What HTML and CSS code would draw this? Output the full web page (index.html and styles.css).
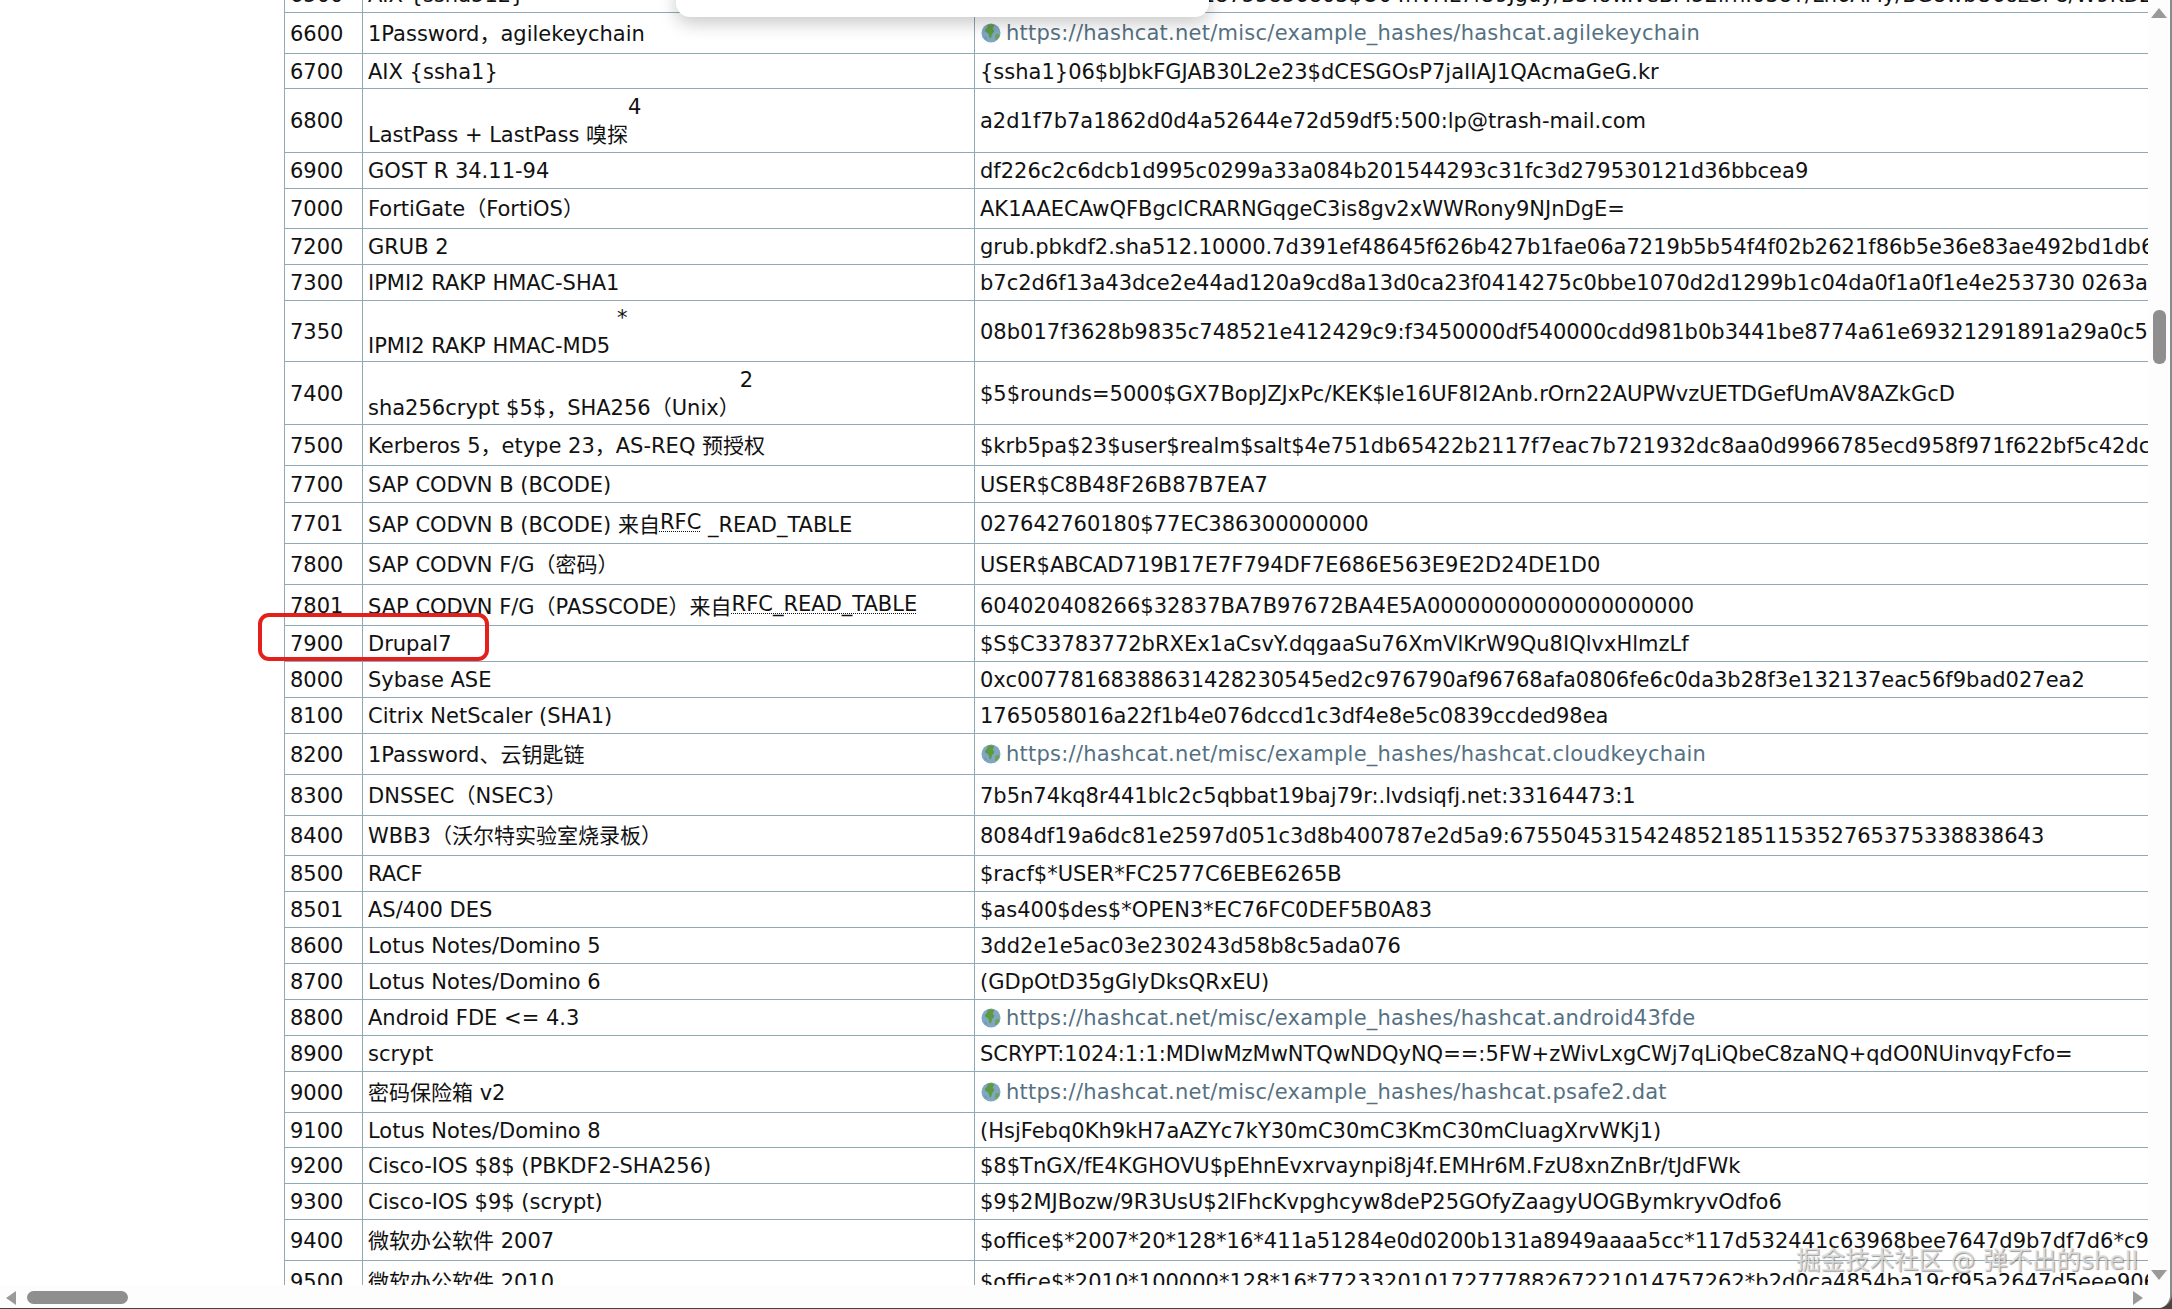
FILE: index.html
```html
<!DOCTYPE html>
<html lang="zh">
<head>
<meta charset="utf-8">
<title>hashcat example hashes</title>
<link rel="stylesheet" href="styles.css">
</head>
<body>
<svg class="defs" width="0" height="0" aria-hidden="true">
  <symbol id="globe" viewBox="0 0 20 20">
    <circle cx="10" cy="10" r="9.5" fill="#7fa6c2"/>
    <path d="M7 2c2-1 5-.8 6 .4.5 1-1 1.600-1.200 2.800-.2 1.300 1.800 1.400 1.400 3-.4 1.500-1.800 1.900-2.200 3.400-.4 1.300-.5 3.200-1.600 3.900C8 15 8.400 12.700 7.500 11 6.600 9.500 4.500 9.500 4 8 3.700 6.300 5.600 5.900 6.200 4.600 6.600 3.600 6.200 2.700 7 2z" fill="#5f9a41"/>
    <path d="M15 11.500c1.300-.4 2.500-.5 3.500-.2-.4 2.500-1.800 4.600-3.900 5.800-.8-.5-.7-2-.4-3.100.2-1.100-.1-2.100.8-2.500z" fill="#6aa548"/>
    <path d="M3.500 13c1 1.500 2 2.800 3.500 3.800-1.800-.4-3-1.800-3.500-3.800z" fill="#4f7c95"/>
  </symbol>
</svg>
<div class="window">
  <div class="main">
    <div class="content">
      <table class="hashes">
        <colgroup><col class="c-mode"><col class="c-name"><col class="c-hash"></colgroup>
        <tbody>
          <tr class="r36"><td>6500</td><td>AIX {ssha512}</td><td>{ssha512}06$4653718755856803$O04nVHL7iU9Jguy/B3Yow.veBM52irn.038Y/Ln6AMy/BG8wbU6ozSP8/W9KDZPUbhdsbl1lf8px.vKJS1S/.</td></tr>
          <tr class="r41"><td>6600</td><td>1Password，agilekeychain</td><td><a class="ext" href="#"><svg class="globe"><use href="#globe"/></svg>https://hashcat.net/misc/example_hashes/hashcat.agilekeychain</a></td></tr>
          <tr class="r35"><td>6700</td><td>AIX {ssha1}</td><td>{ssha1}06$bJbkFGJAB30L2e23$dCESGOsP7jaIIAJ1QAcmaGeG.kr</td></tr>
          <tr class="r64"><td>6800</td><td>LastPass + LastPass 嗅探<span class="note">4</span></td><td>a2d1f7b7a1862d0d4a52644e72d59df5:500:lp@trash-mail.com</td></tr>
          <tr class="r36"><td>6900</td><td>GOST R 34.11-94</td><td>df226c2c6dcb1d995c0299a33a084b201544293c31fc3d279530121d36bbcea9</td></tr>
          <tr class="r40"><td>7000</td><td>FortiGate（FortiOS）</td><td>AK1AAECAwQFBgcICRARNGqgeC3is8gv2xWWRony9NJnDgE=</td></tr>
          <tr class="r36"><td>7200</td><td>GRUB 2</td><td>grub.pbkdf2.sha512.10000.7d391ef48645f626b427b1fae06a7219b5b54f4f02b2621f86b5e36e83ae492bd1db60871e45bc07925cecb46ff8ba3db31c723c0c6acbd4f06f60c5b246ecbf.26d59c52417c3f9d1e7c4f9e0b8f8c1d</td></tr>
          <tr class="r36"><td>7300</td><td>IPMI2 RAKP HMAC-SHA1</td><td>b7c2d6f13a43dce2e44ad120a9cd8a13d0ca23f0414275c0bbe1070d2d1299b1c04da0f1a0f1e4e253730 0263a2d4d2b2d1e7c3f</td></tr>
          <tr class="r61"><td>7350</td><td>IPMI2 RAKP HMAC-MD5 <span class="note">*</span></td><td>08b017f3628b9835c748521e412429c9:f3450000df540000cdd981b0b3441be8774a61e69321291891a29a0c5b7a9c3d2e1f</td></tr>
          <tr class="r63"><td>7400</td><td>sha256crypt $5$，SHA256（Unix）<span class="note">2</span></td><td>$5$rounds=5000$GX7BopJZJxPc/KEK$le16UF8I2Anb.rOrn22AUPWvzUETDGefUmAV8AZkGcD</td></tr>
          <tr class="r41"><td>7500</td><td>Kerberos 5，etype 23，AS-REQ 预授权</td><td>$krb5pa$23$user$realm$salt$4e751db65422b2117f7eac7b721932dc8aa0d9966785ecd958f971f622bf5c42dc9a0e2b1c</td></tr>
          <tr class="r37"><td>7700</td><td>SAP CODVN B (BCODE)</td><td>USER$C8B48F26B87B7EA7</td></tr>
          <tr class="r41"><td>7701</td><td>SAP CODVN B (BCODE) 来自<span class="rfc">RFC</span> _READ_TABLE</td><td>027642760180$77EC386300000000</td></tr>
          <tr class="r41"><td>7800</td><td>SAP CODVN F/G（密码）</td><td>USER$ABCAD719B17E7F794DF7E686E563E9E2D24DE1D0</td></tr>
          <tr class="r41"><td>7801</td><td>SAP CODVN F/G（PASSCODE）来自<span class="rfc">RFC_READ_TABLE</span></td><td>604020408266$32837BA7B97672BA4E5A00000000000000000000</td></tr>
          <tr class="r36"><td>7900</td><td>Drupal7</td><td>$S$C33783772bRXEx1aCsvY.dqgaaSu76XmVlKrW9Qu8IQlvxHlmzLf</td></tr>
          <tr class="r36"><td>8000</td><td>Sybase ASE</td><td>0xc00778168388631428230545ed2c976790af96768afa0806fe6c0da3b28f3e132137eac56f9bad027ea2</td></tr>
          <tr class="r36"><td>8100</td><td>Citrix NetScaler (SHA1)</td><td>1765058016a22f1b4e076dccd1c3df4e8e5c0839ccded98ea</td></tr>
          <tr class="r41"><td>8200</td><td>1Password、云钥匙链</td><td><a class="ext" href="#"><svg class="globe"><use href="#globe"/></svg>https://hashcat.net/misc/example_hashes/hashcat.cloudkeychain</a></td></tr>
          <tr class="r41"><td>8300</td><td>DNSSEC（NSEC3）</td><td>7b5n74kq8r441blc2c5qbbat19baj79r:.lvdsiqfj.net:33164473:1</td></tr>
          <tr class="r40"><td>8400</td><td>WBB3（沃尔特实验室烧录板）</td><td>8084df19a6dc81e2597d051c3d8b400787e2d5a9:6755045315424852185115352765375338838643</td></tr>
          <tr class="r36"><td>8500</td><td>RACF</td><td>$racf$*USER*FC2577C6EBE6265B</td></tr>
          <tr class="r36"><td>8501</td><td>AS/400 DES</td><td>$as400$des$*OPEN3*EC76FC0DEF5B0A83</td></tr>
          <tr class="r36"><td>8600</td><td>Lotus Notes/Domino 5</td><td>3dd2e1e5ac03e230243d58b8c5ada076</td></tr>
          <tr class="r36"><td>8700</td><td>Lotus Notes/Domino 6</td><td>(GDpOtD35gGlyDksQRxEU)</td></tr>
          <tr class="r36"><td>8800</td><td>Android FDE &lt;= 4.3</td><td><a class="ext" href="#"><svg class="globe"><use href="#globe"/></svg>https://hashcat.net/misc/example_hashes/hashcat.android43fde</a></td></tr>
          <tr class="r36"><td>8900</td><td>scrypt</td><td>SCRYPT:1024:1:1:MDIwMzMwNTQwNDQyNQ==:5FW+zWivLxgCWj7qLiQbeC8zaNQ+qdO0NUinvqyFcfo=</td></tr>
          <tr class="r41"><td>9000</td><td>密码保险箱 v2</td><td><a class="ext" href="#"><svg class="globe"><use href="#globe"/></svg>https://hashcat.net/misc/example_hashes/hashcat.psafe2.dat</a></td></tr>
          <tr class="r35"><td>9100</td><td>Lotus Notes/Domino 8</td><td>(HsjFebq0Kh9kH7aAZYc7kY30mC30mC3KmC30mCluagXrvWKj1)</td></tr>
          <tr class="r36"><td>9200</td><td>Cisco-IOS $8$ (PBKDF2-SHA256)</td><td>$8$TnGX/fE4KGHOVU$pEhnEvxrvaynpi8j4f.EMHr6M.FzU8xnZnBr/tJdFWk</td></tr>
          <tr class="r36"><td>9300</td><td>Cisco-IOS $9$ (scrypt)</td><td>$9$2MJBozw/9R3UsU$2lFhcKvpghcyw8deP25GOfyZaagyUOGBymkryvOdfo6</td></tr>
          <tr class="r41"><td>9400</td><td>微软办公软件 2007</td><td>$office$*2007*20*128*16*411a51284e0d0200b131a8949aaaa5cc*117d532441c63968bee7647d9b7df7d6*c9d1f8a2</td></tr>
          <tr class="r41"><td>9500</td><td>微软办公软件 2010</td><td>$office$*2010*100000*128*16*77233201017277788267221014757262*b2d0ca4854ba19cf95a2647d5eee906d*e0a1b2c3</td></tr>
        </tbody>
      </table>
    </div>
    <div class="vbar">
      <span class="tri tri-up"></span>
      <span class="vthumb"></span>
      <span class="tri tri-down"></span>
    </div>
  </div>
  <div class="hbar">
    <span class="tri tri-left"></span>
    <span class="hthumb"></span>
    <span class="tri tri-right"></span>
  </div>
  <div class="popover"></div>
  <div class="highlight"></div>
  <div class="watermark">掘金技术社区 @ 弹不出的shell</div>
</div>
</body>
</html>
```
FILE: styles.css
```css
html, body {
  margin: 0;
  height: 100%;
  overflow: hidden;
  background: #4a4440;
}
.defs { position: absolute; }
.window {
  position: relative;
  height: 1308px;
  display: flex;
  flex-direction: column;
  background: #fff;
  border-right: 2px solid #8a8a8a;
  border-bottom-right-radius: 14px;
  overflow: hidden;
  font-family: "DejaVu Sans", "Noto Sans CJK SC", sans-serif;
  font-size: 21px;
  color: #111;
}
.main {
  display: flex;
  height: 1285px;
}
.content {
  width: 2148px;
  padding-left: 284px;
  box-sizing: border-box;
  overflow: hidden;
}
.hashes {
  margin-top: -24px;
  width: 2000px;
  table-layout: fixed;
  border-collapse: collapse;
}
.c-mode { width: 78px; }
.c-name { width: 612px; }
.hashes td {
  border: 1px solid #8fa9b6;
  padding: 1px 5px 0;
  line-height: 26px;
  white-space: nowrap;
  overflow: hidden;
  box-sizing: border-box;
  vertical-align: middle;
}
.r35 td { height: 35px; }
.r36 td { height: 36px; }
.r37 td { height: 37px; }
.r40 td { height: 40px; }
.r41 td { height: 41px; }
.r61 td { height: 61px; }
.r63 td { height: 63px; }
.r64 td { height: 64px; }
.note { vertical-align: 28px; }
.rfc {
  vertical-align: 3px;
  text-decoration: underline dotted 1px;
  text-underline-offset: 2px;
}
.ext {
  display: inline-flex;
  align-items: center;
  gap: 5px;
  margin-left: 1px;
  padding-top: 2px;
  letter-spacing: .25px;
  color: #557182;
  text-decoration: none;
}
.globe { width: 20px; height: 20px; flex: none; }
.vbar {
  flex: 1;
  display: flex;
  flex-direction: column;
  align-items: center;
  padding: 8px 0 5px;
  box-sizing: border-box;
  background: #fdfdfd;
}
.vthumb {
  width: 13px;
  height: 54px;
  margin-top: 292px;
  margin-bottom: auto;
  border-radius: 6px;
  background: #8f8f8f;
}
.hbar {
  flex: 1;
  display: flex;
  align-items: flex-start;
  padding: 6px 27px 0 6px;
  background: #fdfdfd;
}
.hthumb {
  width: 101px;
  height: 13px;
  margin-left: 11px;
  margin-right: auto;
  border-radius: 7px;
  background: #8f8f8f;
}
.tri { display: block; width: 0; height: 0; }
.tri-up { border: 8px solid transparent; border-top: 0; border-bottom: 10px solid #9a9a9a; }
.tri-down { border: 8px solid transparent; border-bottom: 0; border-top: 10px solid #9a9a9a; }
.tri-left { border: 7px solid transparent; border-left: 0; border-right: 10px solid #9a9a9a; }
.tri-right { border: 7px solid transparent; border-right: 0; border-left: 10px solid #9a9a9a; }
.popover {
  position: absolute;
  left: 676px;
  top: -20px;
  width: 533px;
  height: 37px;
  background: #fff;
  border-radius: 14px;
  box-shadow: 0 6px 18px rgba(0, 0, 0, .22);
}
.highlight {
  position: absolute;
  left: 258px;
  top: 613px;
  width: 231px;
  height: 48px;
  box-sizing: border-box;
  border: 4px solid #e3201b;
  border-radius: 11px;
}
.watermark {
  position: absolute;
  right: 32px;
  top: 1245px;
  font-size: 24.5px;
  line-height: 32px;
  color: rgba(222, 222, 222, .85);
  text-shadow: 1px 1px 1px rgba(0, 0, 0, .4);
}
```
